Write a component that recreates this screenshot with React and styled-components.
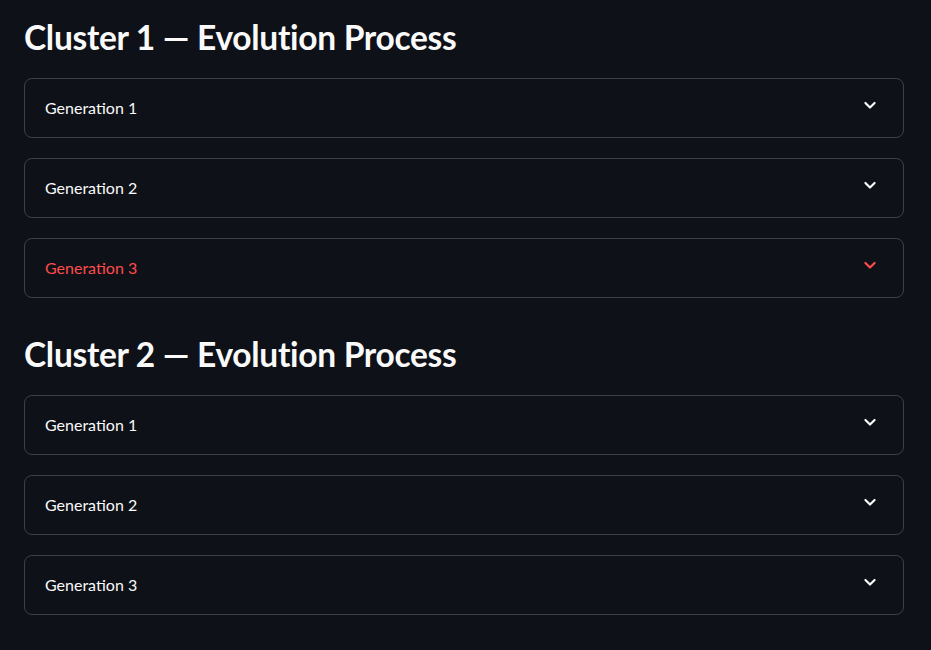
import styled, {createGlobalStyle} from 'styled-components';

const GlobalStyle = createGlobalStyle`
  html, body {
    margin: 0;
    padding: 0;
    background: #0e1117;
  }
  body {
    font-family: Lato, "Noto Sans", sans-serif;
    color: #fafafa;
  }
`;

const clusters = [
  {id: 1, active: 3},
  {id: 2, active: null},
];

function Chevron({active}) {
  return (
    <ChevronIcon viewBox="0 0 24 24" $active={active}>
      <path d="M6.5 9.5 12 15l5.5-5.5" />
    </ChevronIcon>
  );
}

function App() {
  return (
    <>
      <GlobalStyle />
      <Page>
        {clusters.map((c) => (
          <Section key={c.id}>
            <Heading>Cluster {c.id} — Evolution Process</Heading>
            <List>
              {[1, 2, 3].map((g) => (
                <Expander key={g}>
                  <Summary $active={c.active === g}>
                    <Label>Generation {g}</Label>
                    <Chevron active={c.active === g} />
                  </Summary>
                </Expander>
              ))}
            </List>
          </Section>
        ))}
      </Page>
    </>
  );
}

const Page = styled.div`
  width: 880px;
  padding: 12px 0 0 24px;
  display: flex;
  flex-direction: column;
  gap: 31px;
`;

const Section = styled.section`
  display: flex;
  flex-direction: column;
`;

const Heading = styled.h2`
  margin: 0 0 16px;
  font-size: 33.5px;
  font-weight: 700;
  line-height: 50px;
  letter-spacing: -0.3px;
  color: #fafafa;
`;

const List = styled.div`
  display: flex;
  flex-direction: column;
  gap: 20px;
`;

const Expander = styled.div`
  border: 1px solid rgba(250, 250, 250, 0.2);
  border-radius: 8px;
  height: 58px;
  box-sizing: content-box;
`;

const Summary = styled.div`
  height: 100%;
  display: flex;
  align-items: center;
  justify-content: space-between;
  padding: 0 23px 0 20px;
  color: ${({$active}) => ($active ? '#ff4b4b' : '#fafafa')};
`;

const Label = styled.span`
  font-size: 16px;
  line-height: 20px;
`;

const ChevronIcon = styled.svg`
  width: 20px;
  height: 20px;
  margin-top: -6px;
  fill: none;
  stroke: ${({$active}) => ($active ? '#ff4b4b' : '#fafafa')};
  stroke-width: 2.6;
  stroke-linecap: round;
  stroke-linejoin: round;
`;

export default App;
